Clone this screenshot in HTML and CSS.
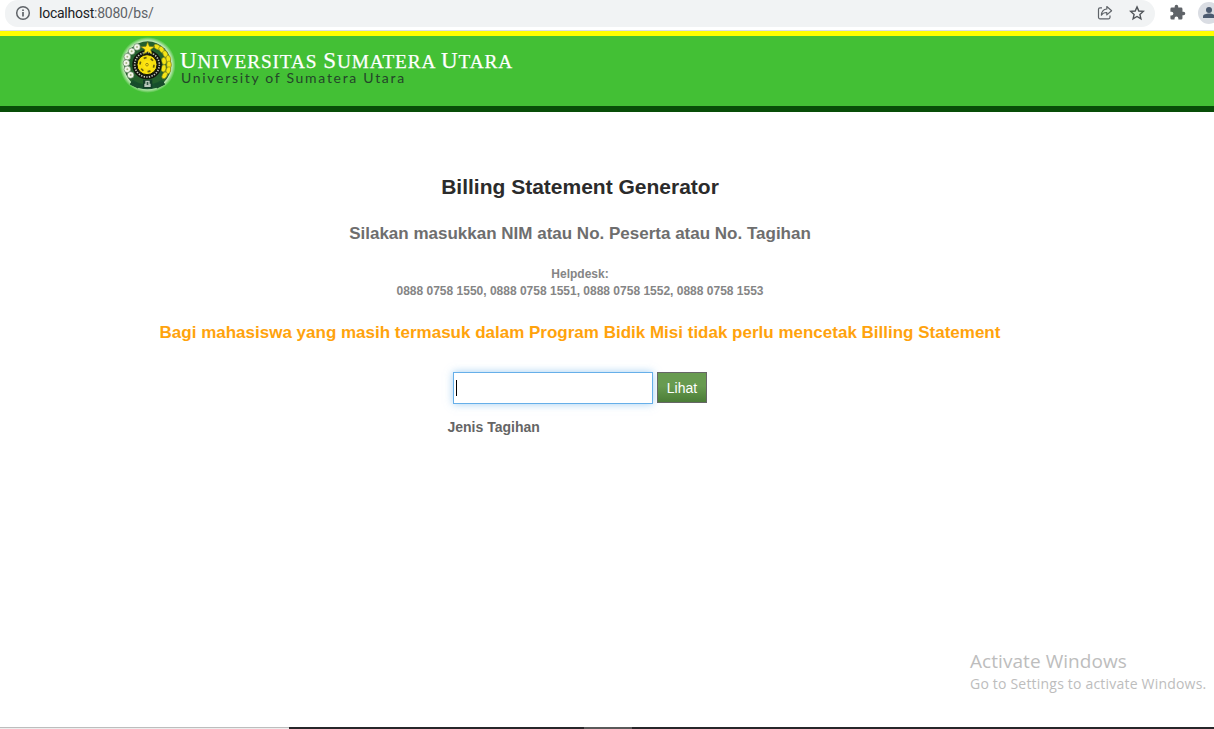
FILE: index.html
```
<!DOCTYPE html>
<html lang="id">
<head>
<meta charset="utf-8">
<title>Billing Statement Generator</title>
<link rel="stylesheet" href="styles.css">
</head>
<body>
<div class="toolbar">
  <div class="address">
    <svg class="info" viewBox="0 0 16 16" width="16" height="16"><circle cx="8" cy="8" r="6.3" fill="none" stroke="#5f6368" stroke-width="1.5"/><path d="M8 7v4.400M8 4.500v1.500" stroke="#5f6368" stroke-width="1.700"/></svg>
    <span class="url"><b>localhost</b>:8080/bs/</span>
    <svg class="share" viewBox="0 0 16 16" width="16" height="16" fill="none" stroke="#5f6368" stroke-width="1.200" stroke-linejoin="round"><path d="M5 2.800H3A1.500 1.500 0 0 0 1.500 4.300v8A1.500 1.500 0 0 0 3 13.800h8.500a1.500 1.500 0 0 0 1.500-1.500V10.500"/><path d="M9.800 1.500 14.600 5.700l-4.800 4.200V7.500C7.500 7.400 5.700 8.200 4.400 10.200 4.600 6.600 6.700 4.300 9.800 4z"/></svg>
    <svg class="star" viewBox="0 0 16 16" width="16" height="16"><path d="M8 1.900l1.800 4.100 4.500.4-3.400 3 1 4.400L8 11.500l-3.900 2.300 1-4.400-3.400-3 4.500-.4z" fill="none" stroke="#4f5358" stroke-width="1.400"/></svg>
  </div>
  <svg class="puzzle" viewBox="0 0 24 24" width="17" height="17"><path fill="#5f6368" d="M20.500 11H19V7a2 2 0 0 0-2-2h-4V3.500a2.500 2.500 0 0 0-5 0V5H4a2 2 0 0 0-2 2v3.800h1.500a2.700 2.700 0 0 1 0 5.400H2V20a2 2 0 0 0 2 2h3.800v-1.500a2.700 2.700 0 0 1 5.400 0V22H17a2 2 0 0 0 2-2v-4h1.500a2.500 2.500 0 0 0 0-5z"/></svg>
  <div class="profile"><svg viewBox="0 0 22 22" width="22" height="22"><circle cx="11" cy="11" r="11" fill="#dadde3"/><circle cx="11" cy="8" r="3" fill="#4c5a70"/><path d="M5 16v-1.500c0-2 3.500-2.900 6-2.900s6 .9 6 2.900V16z" fill="#4c5a70"/></svg></div>
</div>
<header class="banner">
  <svg class="emblem" viewBox="0 0 195 174" width="65" height="58">
    <defs>
      <radialGradient id="halo"><stop offset=".84" stop-color="#d3f0cb"/><stop offset="1" stop-color="#d3f0cb" stop-opacity="0"/></radialGradient>
      <g id="flower"><circle r="10" fill="#f2f5ea" stroke="#5d805c" stroke-width="2"/><circle r="3" fill="#a8b584"/></g>
      <ellipse id="grain" rx="7" ry="11" fill="#f5e516" stroke="#84871b" stroke-width="2"/>
    </defs>
    <circle cx="98" cy="90" r="84" fill="url(#halo)"/>
    <circle cx="98" cy="90" r="71" fill="#24602c"/>
    <path d="M53 134q44 28 88 0l8 14q-52 30-104 0z" fill="#17522d"/>
    <use href="#flower" x="66" y="36"/><use href="#flower" x="50" y="49"/><use href="#flower" x="37" y="65"/><use href="#flower" x="34" y="84"/><use href="#flower" x="37" y="103"/><use href="#flower" x="47" y="120"/>
    <use href="#grain" transform="translate(127 36) rotate(-60)"/><use href="#grain" transform="translate(140 44) rotate(-35)"/><use href="#grain" transform="translate(151 57) rotate(-25)"/><use href="#grain" transform="translate(160 72) rotate(-10)"/><use href="#grain" transform="translate(162 89)"/><use href="#grain" transform="translate(160 106) rotate(15)"/><use href="#grain" transform="translate(149 121) rotate(30)"/><use href="#grain" transform="translate(147 78) rotate(-10)"/><use href="#grain" transform="translate(146 100) rotate(10)"/>
    <circle cx="96" cy="89" r="44" fill="#10150d"/>
    <circle cx="96" cy="89" r="37" fill="none" stroke="#c8c8bd" stroke-width="5" stroke-dasharray="4 4"/>
    <circle cx="96" cy="89" r="30" fill="#f7df0d" stroke="#191b08" stroke-width="3"/>
    <circle cx="96" cy="89" r="21" fill="none" stroke="#665e0c" stroke-width="5" stroke-dasharray="9 13"/>
    <circle cx="96" cy="89" r="12" fill="#ffe413"/>
    <circle cx="96" cy="89" r="4" fill="none" stroke="#756912" stroke-width="2"/>
    <path d="M98 20l5 14 16 1-12 9 5 14-14-8-13 8 5-14-13-9 16-1z" fill="#ffe51d" stroke="#68721a" stroke-width="2"/>
    <path d="M84 134h28v25H84z" fill="#123d28"/><path d="M88 156v-10h3v-9h13v9h3v10z" fill="#bac9bd"/><path d="M95 141h5v9h-5z" fill="#345746"/>
    <path d="M48 142l25 7-5 8-22-11M147 142l-25 7 5 8 22-11" fill="none" stroke="#174c2b" stroke-width="5"/>
  </svg>
  <div class="brand">
    <div class="brand-name"><span>U</span>NIVERSITAS <span>S</span>UMATERA <span>U</span>TARA</div>
    <div class="brand-sub">University of Sumatera Utara</div>
  </div>
</header>
<main class="content">
  <h1 class="title">Billing Statement Generator</h1>
  <h2 class="prompt">Silakan masukkan NIM atau No. Peserta atau No. Tagihan</h2>
  <p class="helpdesk">Helpdesk:<br>0888 0758 1550, 0888 0758 1551, 0888 0758 1552, 0888 0758 1553</p>
  <p class="notice">Bagi mahasiswa yang masih termasuk dalam Program Bidik Misi tidak perlu mencetak Billing Statement</p>
  <div class="search"><div class="field"><i class="caret"></i></div><button class="submit">Lihat</button></div>
  <div class="bill-type">Jenis Tagihan</div>
</main>
<aside class="activation"><div class="activation-title">Activate Windows</div><div class="activation-text">Go to Settings to activate Windows.</div></aside>
<footer class="taskbar"><i class="task-search"></i><i class="task-active"></i></footer>
</body>
</html>
```
FILE: styles.css
```
* { box-sizing: border-box; }
body { margin: 0; height: 729px; overflow: hidden; display: flex; flex-direction: column; background: #fff; font-family: "Liberation Sans", Arial, sans-serif; white-space: nowrap; }
svg { display: block; flex: none; }
.toolbar { height: 31px; flex: none; display: flex; align-items: flex-start; padding-left: 5px; border-bottom: 1px solid #dcdde5; }
.address { width: 1150px; height: 27px; flex: none; display: flex; align-items: center; background: #f1f3f4; border-radius: 13px 14px 14px 13px; padding: 0 10px 1px; }
.url { flex: 1; margin-left: 8px; font: 14px/20px Roboto, sans-serif; letter-spacing: -.24px; color: #5f6368; }
.url b { font-weight: 400; color: #202124; }
.star { margin-left: 16px; }
.puzzle { margin: 4px 0 0 14px; }
.profile { width: 16px; height: 22px; margin: 2px 0 0 12px; overflow: hidden; flex: none; }
.banner { height: 81px; flex: none; display: flex; background: #43c035; border-top: 5px solid #ff0; border-bottom: 6px solid #084d08; padding-left: 115px; }
.emblem { margin-top: -1px; }
.brand { padding-top: 15px; }
.brand-name { font: 19.3px/20px "Liberation Serif", serif; color: #fff; letter-spacing: .9px; -webkit-text-stroke: .25px #fff; }
.brand-name span { font-size: 23px; }
.brand-sub { font: 14px/12px Lato, sans-serif; color: #24452a; letter-spacing: 1.7px; margin: 0 0 0 1px; }
.content { width: 1160px; text-align: center; padding-top: 62px; }
.title, .prompt, .helpdesk, .notice { margin: 0; font-weight: 700; }
.title { font-size: 21px; line-height: 26px; color: #2b2b2b; }
.prompt { margin-top: 23px; font-size: 17px; line-height: 22px; color: #6e6e6e; }
.helpdesk { margin-top: 21px; font-size: 12px; line-height: 17px; color: #858585; }
.notice { margin-top: 22px; font-size: 17px; line-height: 22px; color: #ffa30d; }
.search { display: flex; justify-content: center; gap: 4px; margin-top: 28px; }
.field { width: 200px; height: 32px; border: 1px solid #66afe9; box-shadow: 0 0 8px rgba(102,175,233,.6); padding: 7px 2px; }
.caret { display: block; width: 1px; height: 16px; background: #000; }
.submit { width: 50px; height: 31px; padding: 0; border: 1px solid #666; background: linear-gradient(#689b50 45%, #4b7d37); color: #fff; font: 14px/20px "Liberation Sans", Arial, sans-serif; }
.bill-type { margin: 13px 0 0 447.500px; text-align: left; font-size: 14px; line-height: 20px; font-weight: 700; color: #656565; }
.activation { margin: auto 0 33px 970px; color: #bdbdbd; font-family: "Open Sans", sans-serif; }
.activation-title { font-size: 19px; line-height: 24px; letter-spacing: .06px; margin-bottom: 1px; }
.activation-text { font-size: 14px; line-height: 20px; letter-spacing: .2px; }
.taskbar { flex: none; display: flex; height: 2px; background: #27272a; }
.task-search { width: 289px; background: #eee; border-top: 1px solid #bdbdbd; }
.task-active { width: 48px; margin-left: 295px; background: #5a5a5a; }
```
